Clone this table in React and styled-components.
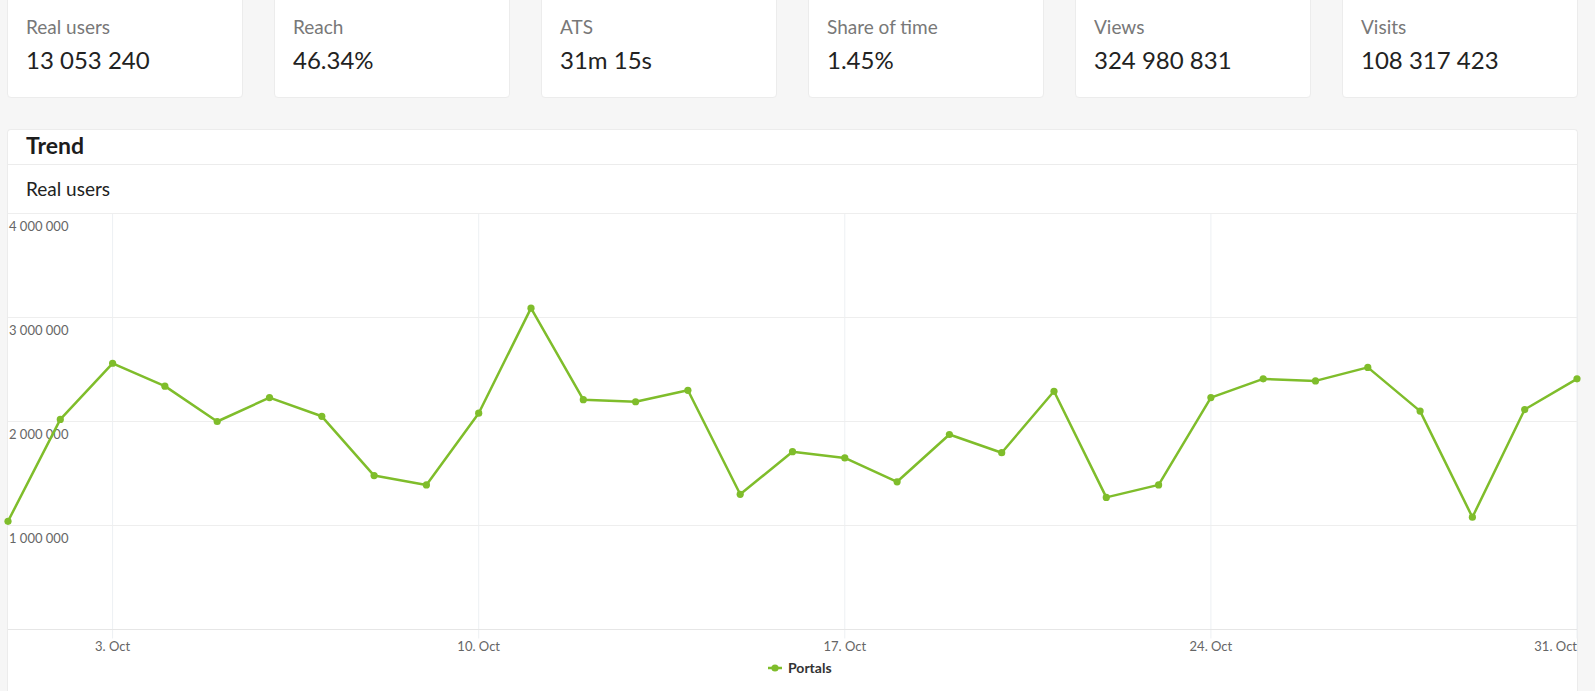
import React from "react";
import styled, { createGlobalStyle } from "styled-components";

const GlobalStyle = createGlobalStyle`
  html, body { margin: 0; padding: 0; background: #f6f6f6; }
  body { font-family: Lato, "Open Sans", "Liberation Sans", sans-serif; color: #222; }
`;

const Page = styled.div`
  display: flex;
  flex-direction: column;
  gap: 31px;
  padding: 0 17px 0 7px;
  margin-top: -10px;
`;

const StatsRow = styled.div`
  display: grid;
  grid-template-columns: repeat(6, 1fr);
  gap: 31px;
`;

const StatCard = styled.div`
  background: #fff;
  border: 1px solid #ececec;
  border-radius: 4px;
  padding: 25px 18px 23px;
  display: flex;
  flex-direction: column;
  gap: 8px;
`;

const StatLabel = styled.div`
  font-size: 19px;
  line-height: 22px;
  color: #787878;
`;

const StatValue = styled.div`
  font-size: 24px;
  line-height: 28px;
  color: #222;
`;

const Panel = styled.section`
  background: #fff;
  border: 1px solid #ececec;
  border-bottom: none;
  border-radius: 4px 4px 0 0;
`;

const PanelHeader = styled.h2`
  margin: 0;
  height: 35px;
  padding: 0 18px 4px;
  box-sizing: border-box;
  display: flex;
  align-items: center;
  font-size: 23px;
  font-weight: 700;
  color: #1c1c1c;
  border-bottom: 1px solid #ececec;
`;

const PanelSub = styled.div`
  height: 48px;
  padding: 0 18px 2px;
  box-sizing: border-box;
  display: flex;
  align-items: center;
  font-size: 19px;
  color: #222;
`;

const ChartSvg = styled.svg`
  display: block;
  width: 100%;
  overflow: visible;
  font-family: Lato, "Open Sans", "Liberation Sans", sans-serif;
`;

const stats = [
  ["Real users", "13 053 240"],
  ["Reach", "46.34%"],
  ["ATS", "31m 15s"],
  ["Share of time", "1.45%"],
  ["Views", "324 980 831"],
  ["Visits", "108 317 423"],
];

const data = [
  1.04, 2.02, 2.56, 2.34, 2.0, 2.23, 2.05, 1.48, 1.39, 2.08, 3.09, 2.21, 2.19,
  2.3, 1.3, 1.71, 1.65, 1.42, 1.875, 1.7, 2.29, 1.27, 1.39, 2.23, 2.41, 2.39,
  2.52, 2.1, 1.08, 2.115, 2.41,
];

const W = 1569;
const H = 490;
const PER = 104;
const Y0 = 416.5;
const dx = W / 30;
const xOf = (i) => i * dx;
const yOf = (v) => Y0 - v * PER;

const GREEN = "#7fbd2b";

function TrendChart() {
  const points = data.map((v, i) => `${xOf(i).toFixed(1)},${yOf(v).toFixed(1)}`).join(" ");
  const weeks = [
    { d: 2, label: "3. Oct" },
    { d: 9, label: "10. Oct" },
    { d: 16, label: "17. Oct" },
    { d: 23, label: "24. Oct" },
    { d: 30, label: "31. Oct" },
  ];
  const ys = [4, 3, 2, 1];
  const legendX = 760;
  return (
    <ChartSvg viewBox={`0 0 ${W} ${H}`} height={H}>
      {weeks.map((w) => (
        <line
          key={w.d}
          x1={xOf(w.d)}
          x2={xOf(w.d)}
          y1={0}
          y2={Y0 + 9}
          stroke="#edf0f3"
          strokeWidth="1"
        />
      ))}
      {ys.map((v) => (
        <line key={v} x1={0} x2={W} y1={yOf(v)} y2={yOf(v)} stroke="#eeeeee" strokeWidth="1" />
      ))}
      <line x1={0} x2={W} y1={Y0} y2={Y0} stroke="#e6e6e6" strokeWidth="1" />
      {ys.map((v) => (
        <text key={v} x={1} y={yOf(v) + 17} fontSize="13" fill="#666">
          {`${v} 000 000`}
        </text>
      ))}
      {weeks.map((w, i) => (
        <text
          key={w.label}
          x={i === weeks.length - 1 ? W : xOf(w.d)}
          y={Y0 + 21}
          fontSize="13"
          fill="#666"
          textAnchor={i === weeks.length - 1 ? "end" : "middle"}
        >
          {w.label}
        </text>
      ))}
      <polyline
        points={points}
        fill="none"
        stroke={GREEN}
        strokeWidth="2.5"
        strokeLinejoin="round"
        strokeLinecap="round"
      />
      {data.map((v, i) => (
        <circle key={i} cx={xOf(i)} cy={yOf(v)} r="3.6" fill={GREEN} />
      ))}
      <g>
        <line x1={legendX} x2={legendX + 14} y1={455} y2={455} stroke={GREEN} strokeWidth="2.5" />
        <circle cx={legendX + 7} cy={455} r="3.6" fill={GREEN} />
        <text x={legendX + 20} y={459.5} fontSize="14" fontWeight="700" fill="#333">
          Portals
        </text>
      </g>
    </ChartSvg>
  );
}

export default function App() {
  return (
    <>
      <GlobalStyle />
      <Page>
        <StatsRow>
          {stats.map(([label, value]) => (
            <StatCard key={label}>
              <StatLabel>{label}</StatLabel>
              <StatValue>{value}</StatValue>
            </StatCard>
          ))}
        </StatsRow>
        <Panel>
          <PanelHeader>Trend</PanelHeader>
          <PanelSub>Real users</PanelSub>
          <TrendChart />
        </Panel>
      </Page>
    </>
  );
}
